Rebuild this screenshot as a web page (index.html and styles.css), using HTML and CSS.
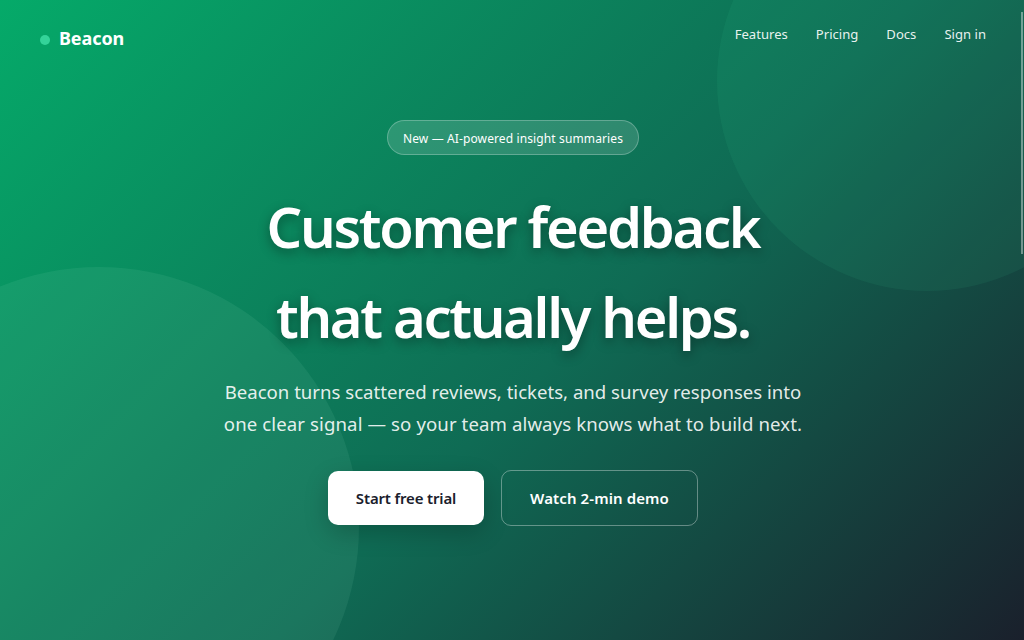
FILE: index.html
```html
<!DOCTYPE html>
<html lang="en">
<head>
<meta charset="utf-8">
<title>Beacon</title>
<link rel="stylesheet" href="styles.css">
</head>
<body>
<div class="hero">
  <div class="circle circle-top"></div>
  <div class="circle circle-bottom"></div>
  <nav class="nav">
    <div class="brand"><span class="dot"></span><span>Beacon</span></div>
    <div class="links">
      <a href="#">Features</a>
      <a href="#">Pricing</a>
      <a href="#">Docs</a>
      <a href="#">Sign in</a>
    </div>
  </nav>
  <main class="content">
    <div class="badge">New — AI-powered insight summaries</div>
    <h1>Customer feedback<br>that actually helps.</h1>
    <p class="lead">Beacon turns scattered reviews, tickets, and survey responses into<br><span class="lead-second">one clear signal — so your team always knows what to build next.</span></p>
    <div class="actions">
      <a class="btn btn-primary" href="#">Start free trial</a>
      <a class="btn btn-ghost" href="#">Watch 2-min demo</a>
    </div>
  </main>
  <div class="scrollbar"></div>
</div>
</body>
</html>
```

FILE: styles.css
```css
* { box-sizing: border-box; }
html, body { margin: 0; height: 100%; overflow: hidden; }
body { font-family: "Noto Sans", sans-serif; color: #fff; }
a { color: inherit; text-decoration: none; }
.hero {
  position: relative;
  height: 640px;
  overflow: hidden;
  background: linear-gradient(135deg, #05aa69 0%, #0f6b54 55%, #1a202c 100%);
}
.circle { position: absolute; border-radius: 50%; }
.circle-top { width: 420px; height: 420px; left: 717px; top: -129px; background: rgba(70,220,155,0.08); }
.circle-bottom { width: 520px; height: 520px; left: -161px; top: 267px; background: rgba(150,235,195,0.09); }
.nav {
  position: relative;
  display: flex;
  justify-content: space-between;
  align-items: flex-start;
  padding: 24px 38px 0 40px;
}
.brand { display: flex; align-items: center; gap: 9px; font-size: 18px; font-weight: 700; line-height: 28px; letter-spacing: -0.1px; }
.dot { width: 10px; height: 10px; border-radius: 50%; background: #34d399; margin-top: 4px; }
.links { display: flex; gap: 28px; font-size: 13.1px; line-height: 20px; color: rgba(255,255,255,0.92); }
.content { position: relative; display: flex; flex-direction: column; align-items: center; padding: 68px 0 0 2px; text-align: center; }
.badge {
  height: 35px;
  padding: 1px 15px 0;
  display: flex;
  align-items: center;
  font-size: 12px;
  letter-spacing: 0.12px;
  border: 1px solid rgba(255,255,255,0.25);
  border-radius: 18px;
  background: rgba(255,255,255,0.14);
}
h1 {
  margin: 26px 0 0;
  font-size: 56px;
  line-height: 90px;
  font-weight: 640;
  letter-spacing: -2.3px;
  text-shadow: 0 4px 12px rgba(0,0,0,0.36);
}
.lead { margin: 15px 0 0; font-size: 18.6px; line-height: 32px; color: rgba(255,255,255,0.9); }
.lead-second { letter-spacing: 0.1px; }
.actions { display: flex; gap: 17px; align-items: center; margin-top: 30px; }
.btn { display: flex; align-items: center; justify-content: center; font-size: 15px; font-weight: 600; border-radius: 10px; }
.btn-primary { width: 156px; height: 54px; background: #fff; color: #1a202c; box-shadow: 0 8px 24px rgba(0,0,0,0.2); letter-spacing: -0.15px; }
.btn-ghost { width: 197px; height: 56px; border: 1px solid rgba(255,255,255,0.35); letter-spacing: 0.1px; }
.scrollbar { position: absolute; right: 1px; top: 12px; width: 2px; height: 242px; background: rgba(255,255,255,0.4); }
```
